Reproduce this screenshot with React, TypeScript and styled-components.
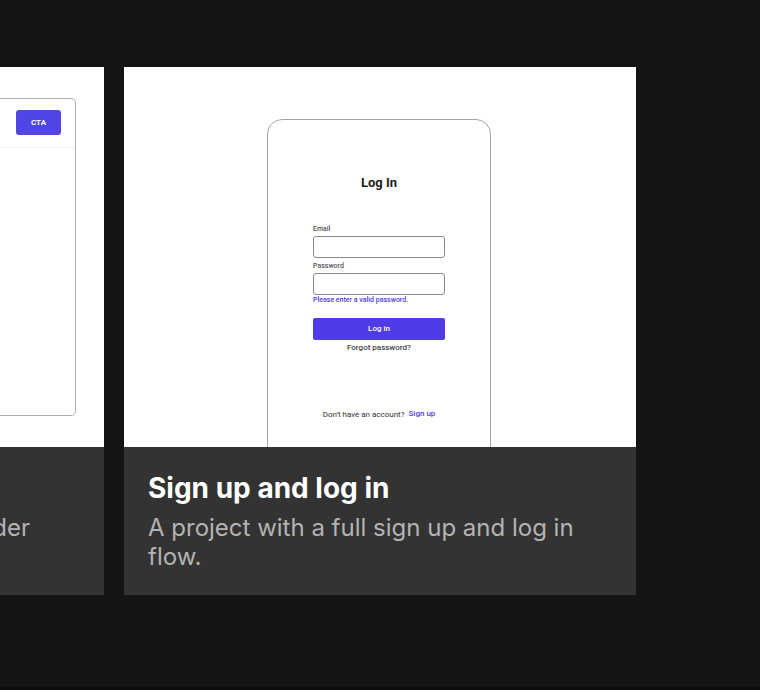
import React from "react";
import styled, { createGlobalStyle } from "styled-components";

const GlobalStyle = createGlobalStyle`
  *, *::before, *::after { box-sizing: border-box; }
  body {
    margin: 0;
    background: #141414;
    font-family: Inter, "Liberation Sans", sans-serif;
  }
  h2, h3, p { margin: 0; }
`;

const Page = styled.main`
  display: flex;
  flex-direction: column;
  min-height: 100vh;
  padding-top: 67px;
  overflow: hidden;
`;

const Cards = styled.div`
  display: flex;
  gap: 20px;
  padding-right: 124px;
`;

const Card = styled.article<{ $partial?: boolean }>`
  display: flex;
  flex-direction: column;
  flex: ${(p) => (p.$partial ? "1 1 0" : "0 1 512px")};
  min-width: 0;
  overflow: hidden;
  background: #333333;
`;

const Preview = styled.div<{ $top: number }>`
  display: flex;
  justify-content: center;
  align-items: flex-start;
  height: 380px;
  padding-top: ${(p) => p.$top}px;
  overflow: hidden;
  background: #ffffff;
  font-family: Roboto, "Liberation Sans", sans-serif;
`;

const PhonePreview = styled(Preview)`
  padding-right: 2px;
`;

const Caption = styled.div`
  padding: 24px;
  min-height: 148px;
`;

const CaptionTail = styled.div`
  display: flex;
  justify-content: flex-end;
  padding: 66px 74px 24px 0;
`;

const Title = styled.h2`
  margin-bottom: 8px;
  color: #ffffff;
  font-size: 28px;
  line-height: 34px;
  font-weight: 700;
`;

const Description = styled.p`
  color: #b3b3b3;
  font-size: 24px;
  line-height: 29px;
`;

const BrowserFrame = styled.div`
  flex: 1;
  height: 318px;
  margin-right: 28px;
  border: 1px solid #adadad;
  border-left: 0;
  border-radius: 0 5px 5px 0;
`;

const BrowserBar = styled.div`
  display: flex;
  justify-content: flex-end;
  padding: 11px 14px 12px 0;
  border-bottom: 1px solid #f0f0f0;
`;

const CtaButton = styled.button`
  width: 45px;
  height: 25px;
  padding: 0;
  border: 0;
  border-radius: 3px;
  background: #4f46e5;
  color: #ffffff;
  font: 700 8px/10px Roboto, sans-serif;
`;

const PhoneFrame = styled.form`
  display: flex;
  flex-direction: column;
  width: 224px;
  height: 440px;
  padding: 55px 45px 0;
  border: 1px solid #a3a3a3;
  border-radius: 15px;
`;

const FormTitle = styled.h3`
  margin-bottom: 33px;
  color: #222222;
  text-align: center;
  font-size: 13px;
  line-height: 16px;
  font-weight: 700;
`;

const Field = styled.div`
  display: flex;
  flex-direction: column;
  margin-bottom: 3px;
`;

const Label = styled.label`
  margin-bottom: 2px;
  color: #555555;
  font-size: 7px;
  line-height: 10px;
  font-weight: 500;
`;

const Input = styled.input`
  width: 100%;
  height: 22px;
  padding: 0 6px;
  border: 1px solid #8a8a8a;
  border-radius: 3px;
  background: #ffffff;
  font: 400 8px/10px Roboto, sans-serif;
`;

const ErrorText = styled.p`
  color: #503be9;
  font-size: 7px;
  line-height: 10px;
  font-weight: 500;
`;

const SubmitButton = styled.button`
  height: 22px;
  margin-top: 10px;
  padding: 0;
  border: 0;
  border-radius: 2px;
  background: #503be9;
  color: #ffffff;
  font: 500 8px/10px Roboto, sans-serif;
`;

const Link = styled.a<{ $accent?: boolean }>`
  color: ${(p) => (p.$accent ? "#503be9" : "#444444")};
  text-decoration: none;
  font-size: 8px;
  line-height: 10px;
  font-weight: 500;
`;

const ForgotRow = styled.div`
  display: flex;
  justify-content: center;
  padding-top: 3px;
`;

const SignUpRow = styled.div`
  display: flex;
  justify-content: center;
  gap: 4px;
  padding-top: 56px;
  white-space: nowrap;
`;

const Question = styled.span`
  color: #333333;
  font-size: 8px;
  line-height: 12px;
`;

const BottomEdge = styled.div`
  height: 3px;
  margin-top: auto;
  background: #120b0e;
`;

export default function App() {
  return (
    <>
      <GlobalStyle />
      <Page>
        <Cards>
          <Card $partial>
            <Preview $top={31}>
              <BrowserFrame>
                <BrowserBar>
                  <CtaButton type="button">CTA</CtaButton>
                </BrowserBar>
              </BrowserFrame>
            </Preview>
            <CaptionTail>
              <Description>der</Description>
            </CaptionTail>
          </Card>
          <Card>
            <PhonePreview $top={52}>
              <PhoneFrame onSubmit={(e: React.FormEvent) => e.preventDefault()}>
                <FormTitle>Log In</FormTitle>
                <Field>
                  <Label htmlFor="email">Email</Label>
                  <Input id="email" type="email" />
                </Field>
                <Field>
                  <Label htmlFor="password">Password</Label>
                  <Input id="password" type="password" aria-describedby="password-error" />
                  <ErrorText id="password-error">Please enter a valid password.</ErrorText>
                </Field>
                <SubmitButton type="submit">Log in</SubmitButton>
                <ForgotRow>
                  <Link href="#forgot">Forgot password?</Link>
                </ForgotRow>
                <SignUpRow>
                  <Question>Don't have an account?</Question>
                  <Link $accent href="#signup">Sign up</Link>
                </SignUpRow>
              </PhoneFrame>
            </PhonePreview>
            <Caption>
              <Title>Sign up and log in</Title>
              <Description>A project with a full sign up and log in flow.</Description>
            </Caption>
          </Card>
        </Cards>
        <BottomEdge />
      </Page>
    </>
  );
}
